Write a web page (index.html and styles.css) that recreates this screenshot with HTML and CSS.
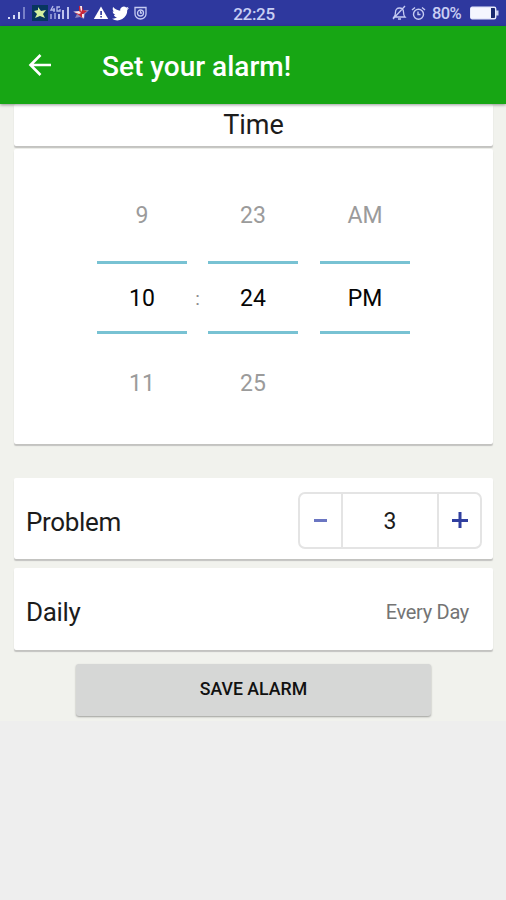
FILE: index.html
```html
<!DOCTYPE html>
<html lang="en">
<head>
    <meta charset="UTF-8">
    <meta name="viewport" content="width=device-width, initial-scale=1.0">
    <title>Set your alarm!</title>
    <link rel="stylesheet" href="styles.css">
</head>
<body>
    <div class="status-bar">
        <div class="status-left">
            <svg width="19" height="16" viewBox="0 0 19 16">
                <path d="M0 12h2v2H0zM5 10h2v4H5zM10 7h2v7h-2z" fill="#d5daf5"/>
                <path d="M15 2h2v12h-2z" fill="#7880c8"/>
            </svg>
            <svg class="star" width="16" height="16" viewBox="0 0 16 16">
                <path d="M0 0h16v16H0z" fill="#07365f"/>
                <path d="M6 2l3 4 5-1-3 4 2 4-5-2-5 2 2-4-3-3 4-1z" fill="#d4f0a0"/>
            </svg>
            <svg class="signal" width="20" height="16" viewBox="0 0 20 16">
                <path d="M3 1L1 5h4M4 3v4M10 2H7v4h3V4M1 9v5M5 8v6" fill="none" stroke="#b4baea" stroke-width="1.3"/>
                <path d="M8 9h2v5H8zM12 5h2v9h-2zM17 2h2v12h-2z" fill="#bdc3ee"/>
            </svg>
            <svg class="plane" width="16" height="16" viewBox="0 0 16 16">
                <path d="M7 1l3 4 6 0-4 4-1 5-4-2-5 1 2-4-4-3 6 0z" fill="#8f86bd"/>
                <path d="M6 1h3l1 4 4 1-4 3-1 4-3-3-4-2 4-2z" fill="#c82639"/>
                <path d="M7 1h2v4l-1 2zM1 7l5-1 2 2-2 1zM9 9l2 0 0 4-2-1z" fill="#f6e8ec"/>
            </svg>
            <svg class="warning" width="16" height="16" viewBox="0 0 16 16">
                <path d="M8 1.5L15.2 14H.8z" fill="#fff"/>
                <path d="M7.3 6h1.6v4H7.3zM7.3 11h1.6v1.5H7.3z" fill="#2d3699"/>
            </svg>
            <svg class="bird" width="17" height="16" viewBox="0 0 24 22">
                <path d="M23.9 4.1c-.9.4-1.8.7-2.8.8 1-.6 1.8-1.6 2.1-2.7-.9.5-2 1-3.1 1.2A4.9 4.9 0 0 0 11.7 7.8C7.7 7.6 4.1 5.7 1.7 2.7c-1.3 2.2-.7 5.1 1.5 6.6-.8 0-1.6-.2-2.200-.6 0 2.300 1.600 4.400 3.900 4.900-.7.2-1.500.2-2.200.1.6 2 2.400 3.400 4.600 3.400A9.900 9.900 0 0 1 0 19.100a14 14 0 0 0 21.500-12.400c1-.7 1.800-1.600 2.400-2.600z" fill="#fff"/>
            </svg>
            <svg class="clock" width="13" height="14" viewBox="0 0 13 14" fill="none" stroke="#c5cbf2" stroke-width="1.3">
                <path d="M1 4V1.5h11V4M1 4v4a5.5 5 0 0 0 11 0V4"/>
                <circle cx="6.5" cy="7" r="3"/>
                <path d="M6.5 5v2H8"/>
            </svg>
        </div>
        <div class="status-time">22:25</div>
        <div class="status-right">
            <svg width="15" height="16" viewBox="0 0 15 16" fill="none" stroke="#c5cbf2" stroke-width="1.3">
                <path d="M2 12h11c-1.5-1.5-1.5-2.5-1.5-5S10 3 7.5 3 3.500 5 3.500 7 3.500 10.500 2 12zM6 14h3M1 14L13 1"/>
            </svg>
            <svg class="alarm" width="15" height="15" viewBox="0 0 15 15" fill="none" stroke="#c5cbf2" stroke-width="1.4">
                <circle cx="7.5" cy="8.3" r="5"/>
                <path d="M1 4l3-2.500M14 4l-3-2.500M7 5.500v3h2.500"/>
            </svg>
            <span class="percent">80%</span>
            <svg class="battery" width="29" height="14" viewBox="0 0 29 14">
                <rect x=".7" y="1.2" width="25" height="11.6" rx="1.5" fill="#18296f" stroke="#e6e9fa" stroke-width="1.4"/>
                <path d="M1 2h20v10H1z" fill="#f5f6fe"/>
                <path d="M26 4.5h2.500v5H26z" fill="#cdd3f3"/>
            </svg>
        </div>
    </div>

    <div class="header">
        <svg width="24" height="24" viewBox="0 0 24 24" fill="none" stroke="#fff" stroke-width="2.6">
            <path d="M23 12H2.500M12.500 2L2.500 12l10 10"/>
        </svg>
        <h1>Set your alarm!</h1>
    </div>

    <div class="content">
        <div class="card time-title">Time</div>

        <div class="card picker">
            <div class="column">
                <span class="value">9</span>
                <span class="value selected">10</span>
                <span class="value">11</span>
            </div>
            <div class="colon">:</div>
            <div class="column">
                <span class="value">23</span>
                <span class="value selected">24</span>
                <span class="value">25</span>
            </div>
            <div class="column ampm">
                <span class="value">AM</span>
                <span class="value selected">PM</span>
                <span class="value"></span>
            </div>
        </div>

        <div class="card row problem">
            <span class="label">Problem</span>
            <div class="stepper">
                <button aria-label="Less">
                    <svg width="16" height="16" viewBox="0 0 16 16"><path d="M1 7h13v3H1z" fill="#6b76c2"/></svg>
                </button>
                <span class="count">3</span>
                <button aria-label="More">
                    <svg width="16" height="16" viewBox="0 0 16 16"><path d="M0 7h6.500V0h3v7H16v3H9.500v6h-3v-6H0z" fill="#303f9f"/></svg>
                </button>
            </div>
        </div>

        <div class="card row daily">
            <span class="label">Daily</span>
            <span class="days">Every Day</span>
        </div>

        <button class="save">SAVE ALARM</button>
    </div>
</body>
</html>
```

FILE: styles.css
```css
* {
    box-sizing: border-box;
}
body {
    margin: 0;
    height: 900px;
    background-color: #eeeeee;
    font-family: Roboto, sans-serif;
    color: #1c1c1c;
    overflow: hidden;
}
svg {
    display: block;
    flex-shrink: 0;
}
button {
    padding: 0;
    border: none;
    background: none;
    font-family: inherit;
}
.status-bar {
    display: grid;
    grid-template-columns: 1fr auto 1fr;
    align-items: center;
    height: 26px;
    padding: 0 7px 0 8px;
    background-color: #2e389e;
    color: #c9cff4;
    font-size: 17px;
}
.status-time {
    padding: 2px 0 0 1px;
    font-weight: 500;
    letter-spacing: -0.3px;
}
.status-left,
.status-right {
    display: flex;
    align-items: center;
}
.status-right {
    justify-content: flex-end;
}
.star {
    margin-left: 5px;
}
.signal {
    margin-left: 2px;
}
.plane {
    margin-left: 3px;
}
.warning {
    margin-left: 4px;
}
.bird {
    margin-left: 3px;
}
.clock {
    margin-left: 5px;
}
.alarm {
    margin-left: 4px;
}
.percent {
    width: 32px;
    margin-left: 6px;
    font-size: 16.5px;
    font-weight: 500;
    letter-spacing: -0.6px;
}
.battery {
    margin-left: 6px;
}
.header {
    position: relative;
    z-index: 1;
    display: flex;
    align-items: center;
    height: 78px;
    padding: 0 28px;
    background-color: #17a614;
    box-shadow: 0 1px 3px rgba(0, 0, 0, 0.4);
}
.header h1 {
    margin: 3px 0 0 50px;
    font-size: 28px;
    font-weight: 500;
    color: white;
}
.content {
    display: flex;
    flex-direction: column;
    height: 617px;
    padding: 0 13px 0 14px;
    background-color: #f1f2ed;
}
.card {
    flex-shrink: 0;
    background-color: white;
    border-radius: 2px;
    box-shadow: 0 2px 1px #c3c3c0;
}
.time-title {
    height: 42px;
    line-height: 42px;
    text-align: center;
    font-size: 27px;
}
.picker {
    display: flex;
    height: 295px;
    margin-top: 3px;
    padding: 24px 0 0 83px;
}
.column {
    display: flex;
    flex-direction: column;
    width: 90px;
}
.value {
    height: 88px;
    line-height: 85px;
    text-align: center;
    font-size: 23px;
    color: #9b9b9b;
}
.value.selected {
    height: 73px;
    line-height: 70px;
    border-top: 3px solid #78c2d3;
    border-bottom: 3px solid #78c2d3;
    color: #050505;
}
.value:last-child {
    line-height: 100px;
}
.colon {
    width: 21px;
    padding-top: 114px;
    text-align: center;
    font-size: 19px;
    color: #8c8c8c;
}
.ampm {
    margin-left: 22px;
}
.row {
    display: flex;
    align-items: center;
    justify-content: space-between;
    padding-left: 12px;
}
.label {
    padding-top: 5px;
    font-size: 26px;
    letter-spacing: -0.35px;
}
.problem {
    height: 81px;
    margin-top: 34px;
    padding-right: 11px;
}
.problem .label {
    padding-top: 7px;
}
.stepper {
    display: flex;
    width: 184px;
    height: 57px;
    margin-top: 3px;
    border: 2px solid #e4e4e4;
    border-radius: 7px;
}
.stepper button {
    display: flex;
    align-items: center;
    justify-content: center;
    width: 41px;
}
.count {
    flex: 1;
    border-left: 2px solid #e4e4e4;
    border-right: 2px solid #e4e4e4;
    line-height: 55px;
    text-align: center;
    font-size: 23px;
}
.daily {
    height: 82px;
    margin-top: 9px;
    padding-right: 24px;
}
.days {
    padding-top: 5px;
    font-size: 20px;
    letter-spacing: -0.3px;
    color: #747474;
}
.save {
    flex-shrink: 0;
    width: 355px;
    height: 52px;
    margin: 14px 0 0 62px;
    padding-bottom: 2px;
    border-radius: 3px;
    background-color: #d6d7d6;
    box-shadow: 0 1px 2px rgba(0, 0, 0, 0.35);
    font-size: 17.7px;
    font-weight: 500;
    color: #111111;
}
```
